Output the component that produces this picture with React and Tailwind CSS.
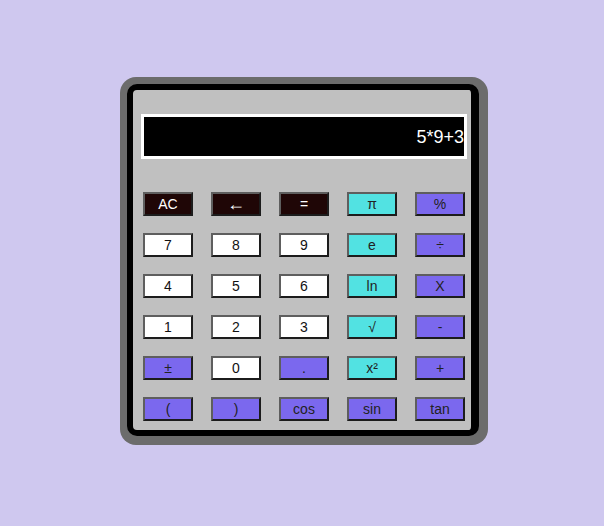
import React from "react";

// Each key: label + colour scheme
const keys = [
  ["AC", "dark"], ["←", "dark"], ["=", "dark"], ["π", "cyan"], ["%", "purple"],
  ["7", "white"], ["8", "white"], ["9", "white"], ["e", "cyan"], ["÷", "purple"],
  ["4", "white"], ["5", "white"], ["6", "white"], ["ln", "cyan"], ["X", "purple"],
  ["1", "white"], ["2", "white"], ["3", "white"], ["√", "cyan"], ["-", "purple"],
  ["±", "purple"], ["0", "white"], [".", "purple"], ["x²", "cyan"], ["+", "purple"],
  ["(", "purple"], [")", "purple"], ["cos", "purple"], ["sin", "purple"], ["tan", "purple"],
];

const schemes = {
  dark: "bg-[#1f0606] text-white",
  cyan: "bg-[#52e2e2] text-[#222]",
  purple: "bg-[#7b68ee] text-[#222]",
  white: "bg-white text-[#111]",
};

function Key({ label, scheme }) {
  return (
    <button
      className={`w-[50px] h-[24px] flex items-center justify-center border-2 border-solid border-t-[#5e5e5e] border-l-[#5e5e5e] border-b-[#1c1c1c] border-r-[#1c1c1c] leading-none ${
        label === "←" ? "text-[18px]" : "text-[14px]"
      } ${schemes[scheme]}`}
    >
      {label}
    </button>
  );
}

export default function App() {
  return (
    <div
      className="w-full h-screen bg-[#cfc8ef] pt-[77px] pl-[120px]"
      style={{ fontFamily: '"Liberation Sans", Arial, sans-serif' }}
    >
      {/* outer gray case */}
      <div className="w-[368px] h-[368px] bg-[#6c6c6c] rounded-[16px] pt-[7px] pl-[7px] pr-[9px] pb-[9px]">
        {/* black frame + light panel */}
        <div className="w-full h-full bg-[#c0c0c0] border-[6px] border-r-[8px] border-black rounded-[10px] flex flex-col">
          <div className="mt-[24px] ml-[8px] w-[326px] h-[45px] border-[3px] border-white bg-black flex items-center justify-end overflow-hidden">
            <span className="text-white text-[18px] leading-none">5*9+3</span>
          </div>
          <div className="mt-[33px] ml-[10px] grid grid-cols-[repeat(5,50px)] gap-x-[18px] gap-y-[17px]">
            {keys.map(([label, scheme]) => (
              <Key key={label} label={label} scheme={scheme} />
            ))}
          </div>
        </div>
      </div>
    </div>
  );
}
